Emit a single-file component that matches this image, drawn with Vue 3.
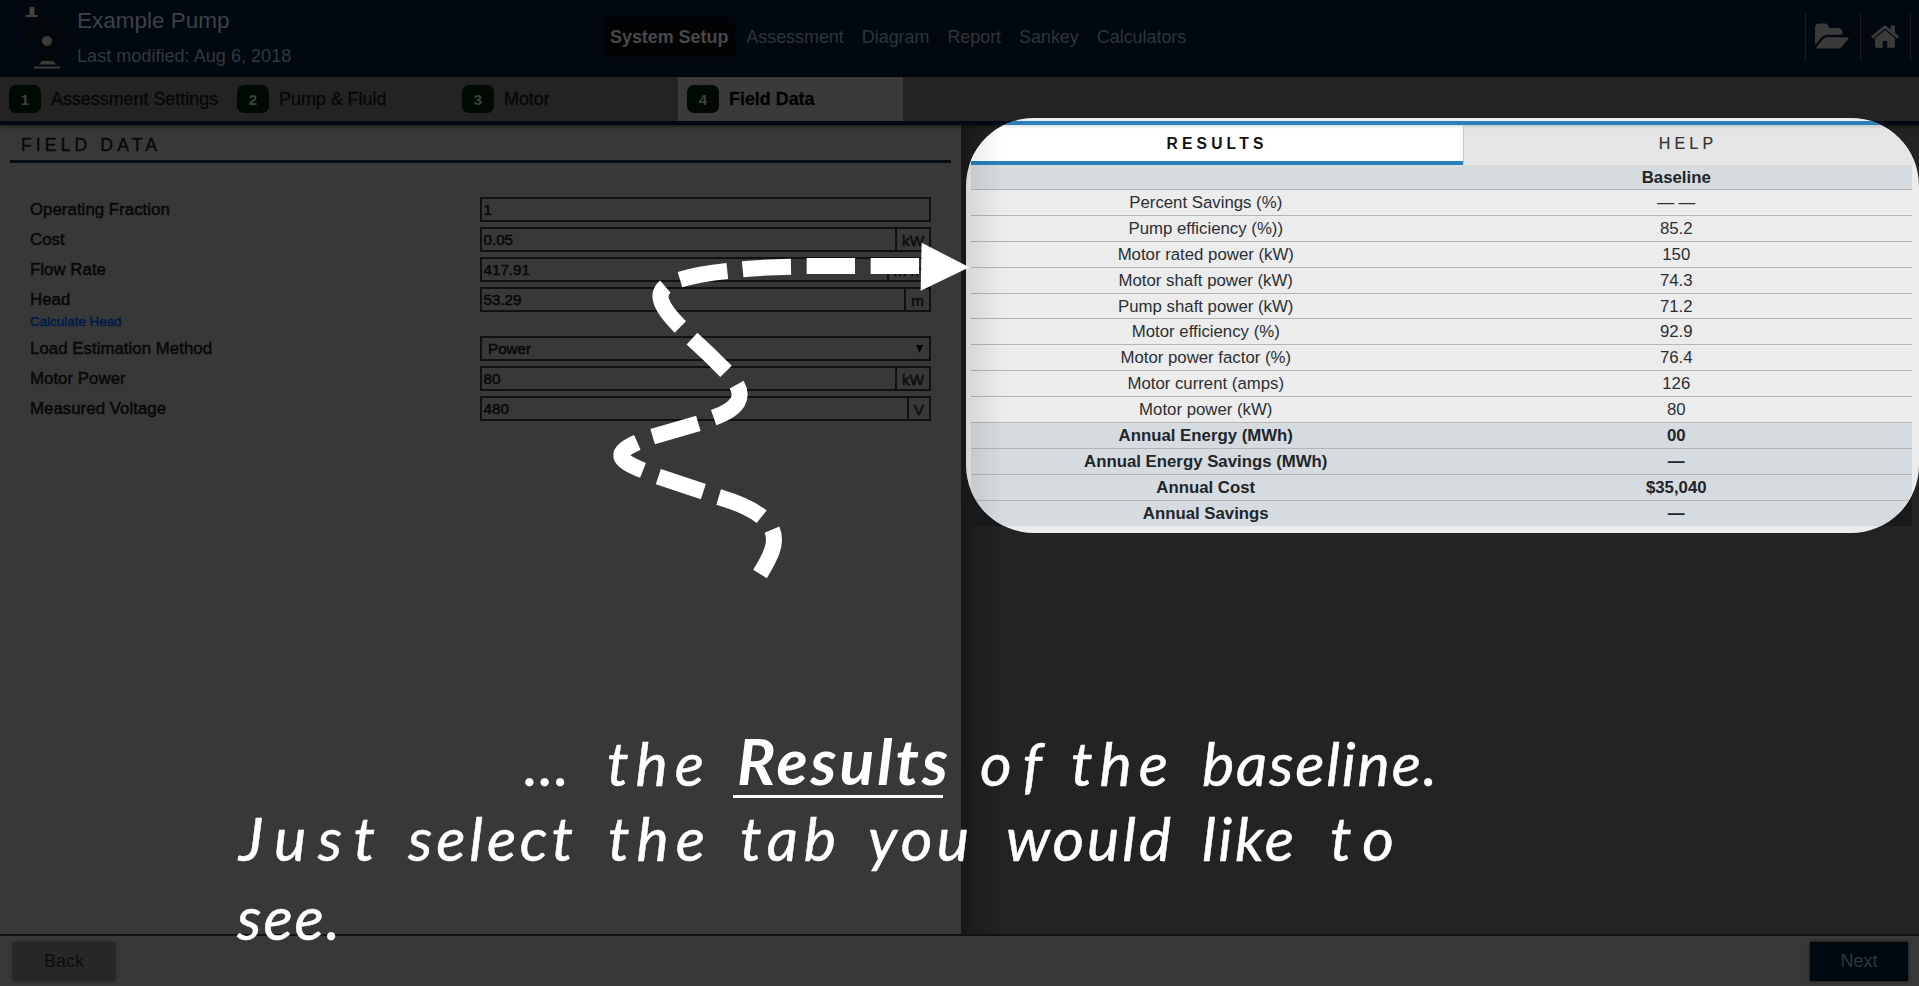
<script setup>
const nav = ['System Setup', 'Assessment', 'Diagram', 'Report', 'Sankey', 'Calculators']
const steps = ['Assessment Settings', 'Pump & Fluid', 'Motor', 'Field Data']
const fields = [
  { label: 'Operating Fraction', value: '1' },
  { label: 'Cost', value: '0.05', unit: 'kW' },
  { label: 'Flow Rate', value: '417.91', unit: 'm³/h' },
  { label: 'Head', value: '53.29', unit: 'm', link: 'Calculate Head' },
  { label: 'Load Estimation Method', value: 'Power', select: true },
  { label: 'Motor Power', value: '80', unit: 'kW' },
  { label: 'Measured Voltage', value: '480', unit: 'V' }
]
const results = [
  ['Percent Savings (%)', '— —'],
  ['Pump efficiency (%))', '85.2'],
  ['Motor rated power (kW)', '150'],
  ['Motor shaft power (kW)', '74.3'],
  ['Pump shaft power (kW)', '71.2'],
  ['Motor efficiency (%)', '92.9'],
  ['Motor power factor (%)', '76.4'],
  ['Motor current (amps)', '126'],
  ['Motor power (kW)', '80'],
  ['Annual Energy (MWh)', '00', true],
  ['Annual Energy Savings (MWh)', '—', true],
  ['Annual Cost', '$35,040', true],
  ['Annual Savings', '—', true]
]
const words = [
  ['...', 524, 786, 45], ['the', 607, 786, 97], ['of', 980, 786, 62],
  ['the', 1071, 786, 97], ['baseline.', 1202, 786, 235],
  ['Just', 239, 861, 136], ['select', 408, 861, 165], ['the', 608, 861, 97],
  ['tab', 740, 861, 96], ['you', 868, 861, 101], ['would', 1006, 861, 165],
  ['like', 1202, 861, 92], ['to', 1330, 861, 64], ['see.', 237, 940, 103]
]
</script>

<template>
  <div class="page">
    <header class="top">
      <svg class="pump" width="46" height="68" viewBox="0 0 46 68">
        <g fill="none" stroke="#070707" stroke-width="3">
          <path d="M6 18V41" />
          <circle cx="25" cy="38" r="18.5" />
          <path d="M15 14V21" />
        </g>
        <circle cx="25" cy="38" r="12" fill="none" stroke="#06090c" stroke-width="5" stroke-dasharray="1.5 4" />
        <circle cx="25" cy="38" r="8" fill="#050607" />
        <circle cx="25" cy="38" r="5" fill="#3b3b3b" />
        <path d="M6 2h9v9h3v5H1v-5h5z" fill="#070809" />
        <path d="M7.500 4h5v8h3v2h-12v-2h4z" fill="#414141" />
        <path d="M18 56h15l4 7h3v5H10v-5h4z" fill="#070809" />
        <path d="M20 58h11l3 3.500H17zM12 63.500h26v2H12z" fill="#3b3b3b" />
      </svg>
      <div class="names">
        <div class="title">Example Pump</div>
        <div class="modified">Last modified: Aug 6, 2018</div>
      </div>
      <nav class="nav">
        <span v-for="(n, i) in nav" :key="n" :class="{ on: i === 0 }">{{ n }}</span>
      </nav>
      <div class="tools">
        <span class="tool folder">
          <svg width="34" height="26" viewBox="0 128 1900 1408"><path fill="#3a3a3a" d="M1879 952q0 31-31 66l-336 396q-43 51-120.500 86.500t-143.500 35.500h-1088q-34 0-60.500-13t-26.500-43q0-31 31-66l336-396q43-51 120.500-86.500t143.500-35.500h1088q34 0 60.500 13t26.500 43zm-343-344v160h-832q-94 0-197 47.500t-164 119.500l-337 396-5 6q0-4-.5-12.500t-.5-12.500v-960q0-92 66-158t158-66h320q92 0 158 66t66 158v32h544q92 0 158 66t66 158z" /></svg>
        </span>
        <span class="tool home">
          <svg width="28" height="23" viewBox="85 240 1622 1300"><path fill="#3a3a3a" d="M1472 992v480q0 26-19 45t-45 19h-384v-384h-256v384h-384q-26 0-45-19t-19-45v-480q0-1 .5-3t.5-3l575-474 575 474q1 2 1 6zm223-69l-62 74q-8 9-21 11h-3q-13 0-21-7l-692-577-692 577q-12 8-24 7-13-2-21-11l-62-74q-8-10-7-23.500t11-21.500l719-599q32-26 76-26t76 26l244 204v-195q0-14 9-23t23-9h192q14 0 23 9t9 23v408l219 182q10 8 11 21.500t-7 23.500z" /></svg>
        </span>
      </div>
    </header>

    <div class="steps">
      <div v-for="(s, i) in steps" :key="s" class="step" :class="{ on: i === 3 }">
        <b class="badge">{{ i + 1 }}</b><span>{{ s }}</span>
      </div>
    </div>

    <main class="body">
      <section class="left">
        <h2>FIELD DATA</h2>
        <div class="form">
          <template v-for="f in fields" :key="f.label">
            <div class="row">
              <label>{{ f.label }}</label>
              <div class="box" :class="{ select: f.select }">
                <span class="value">{{ f.value }}</span>
                <span v-if="f.unit" class="unit">{{ f.unit }}</span>
                <svg v-if="f.select" width="7" height="8" viewBox="0 0 7 8"><path d="M0 0h7L3.500 8z" fill="#050505" /></svg>
              </div>
            </div>
            <a v-if="f.link" class="link">{{ f.link }}</a>
          </template>
        </div>
      </section>
      <section class="right"><div class="shade"></div></section>
    </main>

    <footer class="foot">
      <span class="btn back">Back</span>
      <span class="btn next">Next</span>
    </footer>

    <div class="under"></div>
    <div class="spot">
      <div class="rule"></div>
      <div class="tabs">
        <div class="tab on">RESULTS</div>
        <div class="tab">HELP</div>
      </div>
      <div class="table">
        <div class="tr head"><span></span><span>Baseline</span></div>
        <div v-for="r in results" :key="r[0]" class="tr" :class="{ sum: r[2] }">
          <span>{{ r[0] }}</span><span>{{ r[1] }}</span>
        </div>
      </div>
      <div class="edge"></div>
    </div>

    <svg class="overlay" width="1919" height="986" viewBox="0 0 1919 986">
      <g transform="translate(580 220) scale(.33333)">
        <g fill="none" stroke="#fff" stroke-width="48">
          <path d="M540 1062C575 1005 592 967 576 929" />
          <path d="M545 890Q505 858 416 831" />
          <path d="M370 815L235 770" />
          <path d="M189 751C105 718 105 697 172 667" />
          <path d="M218 650L355 610" />
          <path d="M401 593C480 565 490 530 470 494" />
          <path d="M438 454Q390 405 336 356" />
          <path d="M301 321C235 255 230 222 256 200" />
          <path d="M300 179Q355 162 442 153" />
          <path d="M488 148Q550 142 633 140" />
          <path d="M680 138H825M872 138H1017" />
        </g>
        <path d="M1025 68L1168 142L1022 212Z" fill="#fff" />
      </g>
      <g class="caption">
        <text v-for="(w, i) in words" :key="i" :x="w[1]" :y="w[2]" :textLength="w[3]" lengthAdjust="spacing">{{ w[0] }}</text>
        <text class="strong" x="737" y="785" textLength="211" lengthAdjust="spacing">Results</text>
        <rect x="733" y="795" width="210" height="3" />
      </g>
    </svg>
  </div>
</template>

<style>
body { background: #232323; overflow: hidden; }
</style>

<style scoped>
* { box-sizing: border-box; }
.page { position: relative; width: 1919px; height: 986px; overflow: hidden; display: flex; flex-direction: column; font-family: "Liberation Sans", Arial, sans-serif; font-size: 16.8px; color: #080808; background: #383838; }
.top { height: 77px; flex: none; display: flex; background: #01080f; color: #3a4045; }
.pump { margin: 3px 0 0 22px; flex: none; }
.names { width: 535px; padding: 8px 0 0 9px; line-height: 26px; }
.title { font-size: 22.5px; height: 34px; color: #3c4246; }
.modified { font-size: 18.1px; height: 28px; line-height: 29px; color: #31383d; }
.nav { display: flex; gap: 4px; padding-top: 17px; font-size: 17.9px; line-height: 41px; color: #2e3539; }
.nav span { height: 40px; padding: 0 7px; border-radius: 4px; white-space: nowrap; }
.nav .on { background: #020304; color: #484848; font-weight: bold; }
.tools { margin: 13px 8px 0 auto; height: 48px; display: flex; border-right: 1px solid #1a1d1f; }
.tool { border-left: 1px solid #1a1d1f; padding: 10px 0 0 9px; width: 55px; }
.home { width: 50px; padding: 12px 0 0 10px; }
.steps { height: 48px; flex: none; display: flex; background: #232323; border-bottom: 4px solid #010914; box-shadow: 0 1px 4px rgba(0,0,0,.65); position: relative; font-size: 17.9px; }
.step { width: 225px; display: flex; align-items: center; gap: 10px; padding-left: 9px; white-space: nowrap; color: #070707; -webkit-text-stroke: .3px #070707; }
.step:first-child { width: 228px; }
.step.on { background: #3a3a3a; font-weight: bold; color: #000; }
.badge { width: 32px; height: 28px; border-radius: 7px; background: #010a01; color: #3c433c; font-size: 15px; line-height: 29px; text-align: center; -webkit-text-stroke: 0; }
.body { flex: 1; display: flex; min-height: 0; }
.left { width: 961px; background: #383838; }
h2 { margin: 0 10px; height: 38px; padding: 7px 0 0 11px; font-size: 17.6px; font-weight: normal; letter-spacing: 4.100px; line-height: 26px; border-bottom: 3px solid #060d12; -webkit-text-stroke: .4px #080808; }
.form { padding: 34.300px 30px 0; }
.row { display: flex; height: 25px; margin-bottom: 4.800px; }
label { width: 450px; line-height: 26px; -webkit-text-stroke: .5px #080808; letter-spacing: .05px; }
.box { width: 451px; border: 2px solid #111; display: flex; align-items: stretch; justify-content: space-between; font-size: 15.2px; line-height: 21px; padding-left: 1.500px; -webkit-text-stroke: .5px #080808; }
.select { padding-left: 6px; padding-right: 6px; align-items: center; }
.unit { border-left: 2px solid #111; padding: 1px 5px 0 5px; color: #111; }
.link { display: block; height: 16px; margin: -3px 0 6.700px; font-size: 13.4px; line-height: 17px; color: #001b48; -webkit-text-stroke: .5px #001b48; }
.right { flex: 1; background: #232323; display: flex; }
.shade { width: 42px; background: linear-gradient(90deg, #181818, #1d1d1d 35%, #232323); }
.foot { height: 52px; flex: none; border-top: 2px solid #121212; background: #383838; display: flex; justify-content: space-between; padding: 6px 11px 0 13px; font-size: 17.9px; line-height: 39px; text-align: center; }
.btn { height: 39px; box-shadow: 0 0 3px 0 #1b1b1b; }
.back { width: 102px; background: #272727; color: #0d0d0d; border-radius: 3px; }
.next { width: 98px; background: #010910; color: #30363a; border: 1px solid #020304; line-height: 37px; box-shadow: 0 0 3px 0 #111; }
.under { position: absolute; left: 971px; top: 450px; width: 941px; height: 76px; background: #17191b; }
.spot { position: absolute; left: 966px; top: 117.500px; width: 953px; height: 415px; border-radius: 68px; overflow: hidden; background: #ececec; padding-top: 3.500px; color: #2b2f33; }
.rule { height: 4px; background: #2980b9; }
.tabs { display: flex; height: 40px; padding-left: 5px; font-size: 16px; letter-spacing: 4.200px; line-height: 37px; text-align: center; box-shadow: inset 0 3px 3px -1px rgba(0,0,0,.12); background: #e5e5e5; }
.tab { width: 449px; color: #333; border-left: 1px solid #c8c8c8; -webkit-text-stroke: .2px #333; }
.tab.on { width: 492px; background: #fff; border: 0; border-bottom: 4px solid #2980b9; color: #111; font-size: 15.6px; font-weight: bold; -webkit-text-stroke: 0; box-shadow: inset 0 3px 3px -1px rgba(0,0,0,.12); }
.table { width: 941px; margin-left: 5px; }
.tr { display: grid; grid-template-columns: 1fr 1fr; height: 25.900px; line-height: 26px; text-align: center; border-top: 1px solid #b3b5b6; }
.tr span { margin-left: -1px; }
.head { height: 24px; border: 0; line-height: 25px; }
.head, .sum { background: #d6dbdf; font-weight: bold; color: #212529; }
.edge { position: absolute; left: 0; top: 0; width: 38px; height: 100%; background: linear-gradient(90deg, rgba(0,0,0,.09), rgba(0,0,0,0)); }
.overlay { position: absolute; left: 0; top: 0; }
.caption { fill: #fff; font-family: "Segoe Print", Lato, sans-serif; font-style: italic; font-size: 61px; font-weight: 400; stroke: #fff; stroke-width: .5px; }
.strong { font-weight: bold; font-size: 64px; stroke-width: 0; }
.caption rect { stroke: none; }
</style>
